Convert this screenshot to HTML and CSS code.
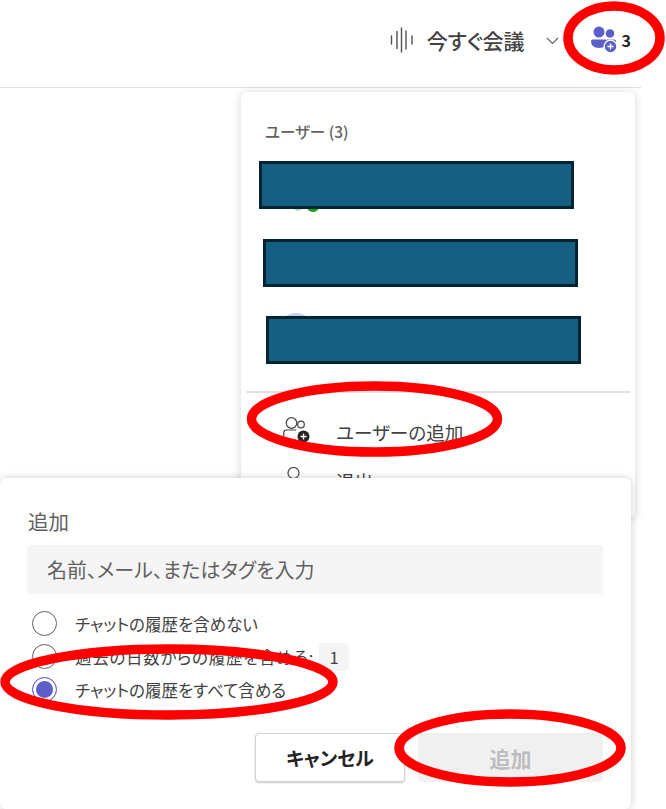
FILE: index.html
```html
<!DOCTYPE html>
<html lang="ja">
<head>
    <meta charset="UTF-8">
    <title>チャット - ユーザーの追加</title>
    <link rel="stylesheet" href="styles.css">
</head>
<body>
    <div class="topbar">
        <svg class="wave-icon" width="24" height="26" viewBox="0 0 24 26" fill="none" stroke="#505050" stroke-width="1.400" stroke-linecap="round">
            <path d="M1.500 9v8M7 4.500v17M11.500 1v24M16 4v18M22 9v8"/>
        </svg>
        <span class="meet-now">今すぐ会議</span>
        <svg class="chevron" width="13" height="8" viewBox="0 0 13 8" fill="none" stroke="#616161" stroke-width="1.100">
            <path d="M1 1l5.500 5.500L12 1"/>
        </svg>
        <svg class="people-icon" width="29" height="27" viewBox="0 0 29 27">
            <circle cx="9" cy="6" r="5.500" fill="#5b5fc7"/>
            <circle cx="20" cy="7.500" r="4.300" fill="#5b5fc7"/>
            <path d="M1 15q0-1.500 1.500-1.500h13q1.500 0 1.500 1.500q0 7-8 7t-8-7z" fill="#5b5fc7"/>
            <path d="M17 13.500h7q2 0 2 1.500v3h-9z" fill="#5b5fc7"/>
            <circle cx="20.500" cy="20.500" r="6.300" fill="#5b5fc7" stroke="#fff" stroke-width="1.200"/>
            <path d="M20.500 17.500v6M17.500 20.500h6" stroke="#fff" stroke-width="1.300"/>
        </svg>
        <span class="people-count">3</span>
    </div>

    <div class="people-panel">
        <div class="panel-title">ユーザー (3)</div>
        <div class="person-row first">
            <span class="peek green"></span>
            <span class="peek green-dim"></span>
            <div class="redact"></div>
        </div>
        <div class="person-row second">
            <div class="redact"></div>
        </div>
        <div class="person-row third">
            <span class="peek lavender"></span>
            <div class="redact"></div>
        </div>
        <div class="panel-divider"></div>
        <div class="menu-item add-user">
            <svg width="27" height="26" viewBox="0 0 27 26" fill="none" stroke="#424242" stroke-width="1.200">
                <circle cx="8.500" cy="6" r="5.300"/>
                <circle cx="18" cy="7.500" r="3.300"/>
                <path d="M0.800 19.500v-4q0-2.500 2.500-2.500h10"/>
                <circle cx="20.500" cy="19.500" r="6" fill="#242424" stroke="none"/>
                <path d="M20.500 16.500v6M17.500 19.500h6" stroke="#fff" stroke-width="1.300"/>
            </svg>
            <span>ユーザーの追加</span>
        </div>
        <div class="menu-item">
            <svg width="27" height="26" viewBox="0 0 27 26" fill="none" stroke="#424242" stroke-width="1.200">
                <circle cx="10.500" cy="6" r="5.500"/>
                <path d="M3 22v-4q0-2 2-2h11q2 0 2 2v4"/>
            </svg>
            <span>退出</span>
        </div>
    </div>

    <div class="add-dialog">
        <div class="dialog-title">追加</div>
        <div class="name-input">名前、メール、またはタグを入力</div>
        <div class="radio-row">
            <span class="radio"></span>
            <span>チャットの履歴を含めない</span>
        </div>
        <div class="radio-row">
            <span class="radio"></span>
            <span class="past-days">過去の日数からの履歴を含める:</span>
            <span class="days-box">1</span>
        </div>
        <div class="radio-row">
            <span class="radio checked"></span>
            <span>チャットの履歴をすべて含める</span>
        </div>
        <div class="dialog-buttons">
            <button class="btn-cancel">キャンセル</button>
            <button class="btn-add" disabled>追加</button>
        </div>
    </div>

    <!-- red marks drawn over the screenshot -->
    <svg class="marks" width="666" height="809" viewBox="0 0 666 809" fill="none" stroke="#ff0000" stroke-width="9.500">
        <ellipse cx="614" cy="38" rx="46" ry="32"/>
        <ellipse cx="374.500" cy="419" rx="123" ry="33"/>
        <ellipse cx="169" cy="682" rx="164" ry="33"/>
        <ellipse cx="510" cy="748" rx="111" ry="34"/>
    </svg>
</body>
</html>
```

FILE: styles.css
```css
html, body {
    margin: 0;
    height: 809px;
    overflow: hidden;
    background: white;
    font-family: "Noto Sans CJK JP", "Noto Sans", sans-serif;
    font-feature-settings: "palt";
    color: #424242;
}
.topbar {
    box-sizing: border-box;
    width: 641px;
    height: 88px;
    padding: 0 10px 8px 0;
    border-bottom: 1px solid #e0e0e0;
    display: flex;
    justify-content: flex-end;
    align-items: center;
}
.wave-icon {
    margin-right: 13px;
}
.meet-now {
    font-size: 21px;
    font-weight: 500;
    color: #424242;
    margin-right: 21px;
}
.chevron {
    margin-right: 31px;
    margin-top: 3px;
}
.people-icon {
    margin-right: 3px;
}
.people-count {
    font-size: 16px;
    font-weight: 700;
    color: #242424;
}
.people-panel {
    position: absolute;
    left: 241px;
    top: 92px;
    box-sizing: border-box;
    width: 394px;
    height: 426px;
    padding: 0 5px;
    background: white;
    border-radius: 6px;
    box-shadow: 0 1px 10px rgba(0,0,0,0.16);
}
.panel-title {
    margin: 29px 0 0 19px;
    height: 20px;
    line-height: 20px;
    font-size: 15.500px;
    font-weight: 500;
    color: #616161;
}
.person-row {
    position: relative;
    height: 48px;
}
.person-row.first {
    margin: 20px 0 0 13px;
}
.person-row.second {
    margin: 30px 0 0 17px;
}
.person-row.third {
    margin: 29px 0 0 20px;
}
.redact {
    position: relative;
    box-sizing: border-box;
    width: 315px;
    height: 100%;
    background: #156082;
    border: 3px solid #042433;
}
.peek {
    position: absolute;
    border-radius: 50%;
}
.peek.green {
    left: 47px;
    top: 36px;
    width: 14px;
    height: 15px;
    background: #13a10e;
}
.peek.green-dim {
    left: 34px;
    top: 38px;
    width: 10px;
    height: 12px;
    background: #b5dfb3;
}
.peek.lavender {
    left: 16px;
    top: -3px;
    width: 28px;
    height: 20px;
    background: #c5cbf3;
}
.panel-divider {
    height: 2px;
    margin-top: 27px;
    background: #e0e0e0;
}
.menu-item {
    display: flex;
    align-items: center;
    height: 50px;
    padding-left: 37px;
    font-size: 18.600px;
    color: #424242;
}
.menu-item.add-user {
    margin-top: 12px;
}
.menu-item.add-user span {
    margin-top: 3px;
}
.menu-item svg {
    margin-right: 26px;
}
.add-dialog {
    position: absolute;
    left: 0;
    top: 478px;
    box-sizing: border-box;
    width: 631px;
    height: 331px;
    padding: 26px 28px 0 27px;
    background: white;
    border-radius: 6px;
    box-shadow: 0 0 8px rgba(0,0,0,0.2);
}
.dialog-title {
    height: 34px;
    line-height: 34px;
    font-size: 20.500px;
    color: #616161;
    margin: 0 0 7px 1px;
}
.name-input {
    height: 49px;
    line-height: 49px;
    padding-left: 20px;
    margin-bottom: 13px;
    background: #f5f5f5;
    border-radius: 4px;
    font-size: 20px;
    color: #616161;
}
.radio-row {
    display: flex;
    align-items: center;
    height: 33px;
    padding-left: 5px;
    font-size: 16.500px;
    color: #424242;
}
.radio {
    box-sizing: border-box;
    width: 25px;
    height: 25px;
    margin-right: 18px;
    border: 1.500px solid #616161;
    border-radius: 50%;
}
.radio.checked {
    border-color: #6264d9;
    background: #5b5fc7;
    box-shadow: inset 0 0 0 3px white;
}
.past-days {
    letter-spacing: 0.7px;
}
.days-box {
    width: 30px;
    height: 28px;
    line-height: 28px;
    margin-left: 5px;
    text-align: center;
    background: #f5f5f5;
    border-radius: 4px;
}
.dialog-buttons {
    display: flex;
    justify-content: flex-end;
    gap: 13px;
    margin-top: 27px;
}
.btn-cancel, .btn-add {
    height: 49px;
    border-radius: 4px;
    font-family: inherit;
    font-feature-settings: inherit;
    font-size: 19px;
    font-weight: 700;
}
.btn-cancel {
    width: 150px;
    background: white;
    border: 1px solid #d1d1d1;
    box-shadow: 0 1px 2px rgba(0,0,0,0.2);
    color: #242424;
}
.btn-add {
    width: 185px;
    background: #f0f0f0;
    border: none;
    font-size: 21px;
    color: #bdbdbd;
}
.marks {
    position: absolute;
    left: 0;
    top: 0;
}
```
